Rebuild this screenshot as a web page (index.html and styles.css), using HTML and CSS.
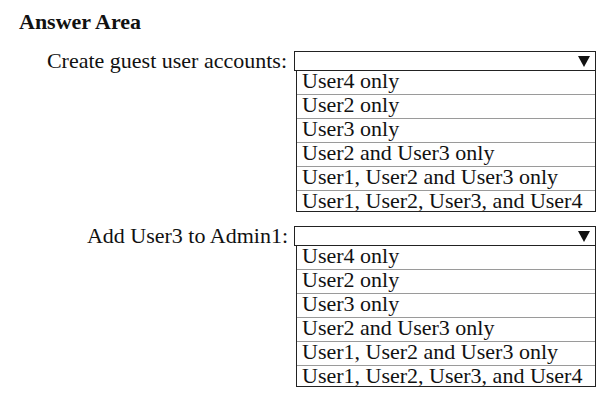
FILE: index.html
```html
<!DOCTYPE html>
<html>
<head>
<meta charset="utf-8">
<link rel="stylesheet" href="styles.css">
</head>
<body>
<div class="page">
  <h1 class="title">Answer Area</h1>
  <div class="field">
    <div class="label">Create guest user accounts:</div>
    <div class="select">
      <div class="head"><span class="arrow"></span></div>
      <ul class="options">
        <li>User4 only</li>
        <li>User2 only</li>
        <li>User3 only</li>
        <li>User2 and User3 only</li>
        <li>User1, User2 and User3 only</li>
        <li class="last">User1, User2, User3, and User4</li>
      </ul>
    </div>
  </div>
  <div class="field field-second">
    <div class="label">Add User3 to Admin1:</div>
    <div class="select">
      <div class="head"><span class="arrow"></span></div>
      <ul class="options">
        <li>User4 only</li>
        <li>User2 only</li>
        <li>User3 only</li>
        <li>User2 and User3 only</li>
        <li>User1, User2 and User3 only</li>
        <li class="last">User1, User2, User3, and User4</li>
      </ul>
    </div>
  </div>
</div>
</body>
</html>
```
FILE: styles.css
```css
html, body {
  margin: 0;
  padding: 0;
  background: #ffffff;
}
.page {
  width: 610px;
  height: 396px;
  padding: 10px 0 0 0;
  box-sizing: border-box;
  font-family: "Liberation Serif", "Times New Roman", serif;
  color: #111111;
}
.title {
  margin: 0 0 0 19px;
  font-size: 22px;
  line-height: 24px;
  font-weight: bold;
}
.field {
  display: flex;
  align-items: flex-start;
  margin-top: 17px;
}
.field-second {
  margin-top: 14px;
  padding-left: 3px;
}
.label {
  width: 287px;
  text-align: right;
  font-size: 22px;
  line-height: 20px;
  margin-right: 7px;
  flex: none;
  white-space: nowrap;
}
.field-second .label {
  width: 285px;
  margin-right: 6px;
}
.select {
  width: 302px;
  flex: none;
}
.head {
  height: 18px;
  border: 1px solid #222222;
  display: flex;
  justify-content: flex-end;
  align-items: center;
  padding-right: 5px;
}
.arrow {
  width: 0;
  height: 0;
  margin-top: 1px;
  border-left: 6px solid transparent;
  border-right: 6px solid transparent;
  border-top: 11px solid #111;
}
.options {
  list-style: none;
  margin: 0 0 0 2px;
  padding: 0;
  border: 1px solid #222222;
  border-top: none;
}
.options li {
  height: 23px;
  line-height: 19px;
  font-size: 22px;
  padding-left: 5px;
  border-bottom: 1px solid #9a9a9a;
  white-space: nowrap;
}
.options li.last {
  height: 20px;
  line-height: 20px;
  border-bottom: none;
}
```
